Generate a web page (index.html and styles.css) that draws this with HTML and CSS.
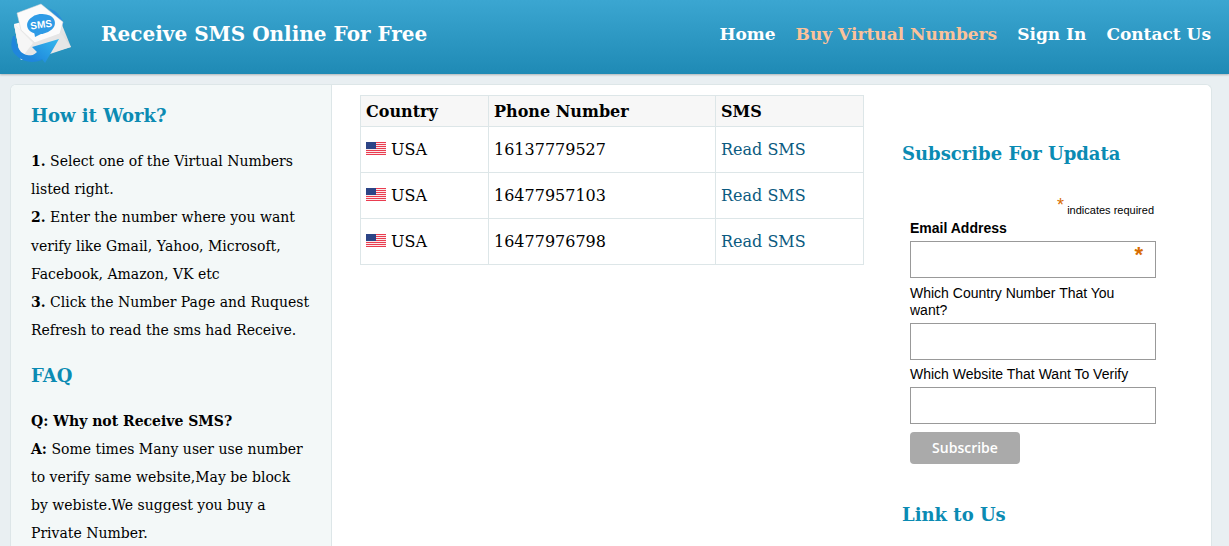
FILE: index.html
```html
<!DOCTYPE html>
<html>
<head>
    <meta charset="UTF-8">
    <title>Receive SMS Online For Free</title>
    <link rel="stylesheet" href="styles.css">
</head>
<body>
    <header class="topbar">
        <div class="brand">
            <svg class="logo" width="64" height="68" viewBox="10 0 64 68">
                <defs>
                    <linearGradient id="arrowFill" x1="0" y1="1" x2="1" y2="0">
                        <stop offset="0" stop-color="#1a7fd8"/>
                        <stop offset="1" stop-color="#35b8ee"/>
                    </linearGradient>
                    <linearGradient id="envFill" x1="0" y1="0" x2="1" y2="1">
                        <stop offset="0" stop-color="#ffffff"/>
                        <stop offset="1" stop-color="#d0d0d0"/>
                    </linearGradient>
                </defs>
                <!-- back swoosh -->
                <path d="M48 8 Q61 12 64 25 L60 25 Q56 14 48 8Z" fill="#2a8fdc"/>
                <!-- envelope and letter -->
                <path d="M14 24 L30 20 L60 20 L71 47 L43 55 L21 60Z" fill="url(#envFill)"/>
                <path d="M17 13 L41 4 L63 22 L60 34 L36 44 L21 30Z" fill="#fbfbfb" stroke="#d4d4d4" stroke-width=".5"/>
                <path d="M14 24 L33 43 L61 33 L71 47 L44 56 L21 60Z" fill="#e6e6e6"/>
                <path d="M14 24 L33 43 L26 52 L21 60Z" fill="#f6f6f6"/>
                <!-- bubble -->
                <ellipse cx="41" cy="24" rx="14" ry="10" transform="rotate(-8 41 24)" fill="#2e9be6"/>
                <path d="M34 31 L35 37 L43 33Z" fill="#2e9be6"/>
                <text class="logo-text" x="41" y="28" text-anchor="middle" transform="rotate(-8 41 24)">SMS</text>
                <!-- arrow -->
                <path d="M13 36 Q8 50 18 57 Q28 65 42 60 L40 54 Q28 58 21 52 Q15 45 15 36Z" fill="#1f86dc"/>
                <path d="M59 39 L32 47 L37 52 Q33 56 28 56 Q36 62 42 59 L45 63Z" fill="url(#arrowFill)"/>
            </svg>
            <span class="site-title">Receive SMS Online For Free</span>
        </div>
        <nav class="main-nav">
            <a href="#">Home</a>
            <a href="#" class="active">Buy Virtual Numbers</a>
            <a href="#">Sign In</a>
            <a href="#">Contact Us</a>
        </nav>
    </header>

    <div class="page">
        <aside class="sidebar">
            <h2>How it Work?</h2>
            <p>
                <b>1.</b> Select one of the Virtual Numbers listed right.<br>
                <b>2.</b> Enter the number where you want verify like Gmail, Yahoo, Microsoft, Facebook, Amazon, VK etc<br>
                <b>3.</b> Click the Number Page and Ruquest Refresh to read the sms had Receive.
            </p>
            <h2>FAQ</h2>
            <p class="faq">
                <b>Q: Why not Receive SMS?</b><br>
                <b>A:</b> Some times Many user use number to verify same website,May be block by webiste.We suggest you buy a Private Number.
            </p>
        </aside>

        <main class="numbers">
            <table>
                <thead>
                    <tr><th class="col-country">Country</th><th class="col-phone">Phone Number</th><th>SMS</th></tr>
                </thead>
                <tbody>
                    <tr>
                        <td><span class="country"><svg class="flag" viewBox="0 0 20 13"><use href="#us"/></svg> USA</span></td>
                        <td>16137779527</td>
                        <td><a href="#">Read SMS</a></td>
                    </tr>
                    <tr>
                        <td><span class="country"><svg class="flag" viewBox="0 0 20 13"><use href="#us"/></svg> USA</span></td>
                        <td>16477957103</td>
                        <td><a href="#">Read SMS</a></td>
                    </tr>
                    <tr>
                        <td><span class="country"><svg class="flag" viewBox="0 0 20 13"><use href="#us"/></svg> USA</span></td>
                        <td>16477976798</td>
                        <td><a href="#">Read SMS</a></td>
                    </tr>
                </tbody>
            </table>
            <svg width="0" height="0" class="defs">
                <symbol id="us" viewBox="0 0 20 13">
                    <rect width="20" height="13" fill="#fbe9ea"/>
                    <path d="M0 .5H20M0 2.5H20M0 4.5H20M0 6.5H20M0 8.5H20M0 10.5H20M0 12.5H20" stroke="#ea3c50" stroke-width="1"/>
                    <rect width="10" height="7" fill="#2c4486"/>
                </symbol>
            </svg>
        </main>

        <aside class="right-col">
            <h2>Subscribe For Updata</h2>
            <form class="signup">
                <div class="required-note"><span class="asterisk">*</span> indicates required</div>
                <label class="email-label" for="email">Email Address</label>
                <div class="email-wrap">
                    <input type="text" id="email">
                    <span class="asterisk field-mark">*</span>
                </div>
                <label for="country">Which Country Number That You want?</label>
                <input type="text" id="country">
                <label for="site">Which Website That Want To Verify</label>
                <input type="text" id="site">
                <button type="button">Subscribe</button>
            </form>
            <h2 class="link-head">Link to Us</h2>
        </aside>
    </div>
</body>
</html>
```
FILE: styles.css
```css
html, body {
    height: 546px;
    overflow: hidden;
}
body {
    margin: 0;
    background-color: #e9eff2;
    font-family: "DejaVu Serif", serif;
    color: #000;
}
/* top bar */
.topbar {
    height: 74px;
    box-sizing: border-box;
    display: flex;
    justify-content: space-between;
    align-items: center;
    padding: 0 18px 6px 10px;
    background: linear-gradient(#3ba6d1, #1f8ab5);
    box-shadow: 0 1px 2px rgba(0, 0, 0, .25);
}
.brand {
    display: flex;
    align-items: center;
}
.logo {
    display: block;
}
.logo-text {
    fill: #fff;
    font-family: "Liberation Sans", sans-serif;
    font-size: 10px;
    font-weight: bold;
}
.site-title {
    margin-left: 27px;
    color: #fff;
    font-size: 20px;
    font-weight: bold;
}
.main-nav {
    display: flex;
    gap: 20px;
}
.main-nav a {
    color: #fff;
    font-size: 17px;
    font-weight: bold;
    text-decoration: none;
}
.main-nav a.active {
    color: #fcc29a;
}
/* page card */
.page {
    display: flex;
    margin: 10px 17px 0 10px;
    height: 462px;
    background-color: #fff;
    border: 1px solid #dde6e8;
    border-bottom: 0;
    border-radius: 6px 6px 0 0;
    overflow: hidden;
}
h2 {
    margin: 0;
    color: #0b8bb3;
    font-size: 18px;
    font-weight: bold;
    line-height: 24px;
}
.sidebar {
    width: 321px;
    flex-shrink: 0;
    box-sizing: border-box;
    padding: 19px 20px 0;
    background-color: #f3f8f8;
    border-right: 1px solid #dde6e8;
}
.sidebar p {
    margin: 19px 0 20px;
    font-size: 14px;
    line-height: 28.17px;
}
.sidebar p.faq {
    line-height: 28px;
}
/* numbers table */
.numbers {
    width: 570px;
    flex-shrink: 0;
    box-sizing: border-box;
    padding: 10px 0 0 28px;
}
table {
    width: 504px;
    border-collapse: collapse;
    font-size: 16px;
}
th, td {
    border: 1px solid #dde6e8;
    padding: 0 5px;
    text-align: left;
}
th {
    height: 30px;
    background-color: #f7f7f7;
    font-size: 16px;
    font-weight: bold;
}
td {
    height: 45px;
}
.col-country {
    width: 117px;
}
.col-phone {
    width: 216px;
}
td a {
    color: #0b5a80;
    text-decoration: none;
}
.country {
    display: flex;
    align-items: center;
    gap: 5px;
}
.flag {
    width: 20px;
    height: 13px;
    margin-top: -2px;
}
.defs {
    position: absolute;
}
/* subscribe */
.right-col {
    flex: 1;
    padding-top: 57px;
}
.signup {
    width: 246px;
    margin: 34px 0 0 8px;
    font-family: "Liberation Sans", sans-serif;
    font-size: 14px;
    line-height: 17px;
}
.required-note {
    text-align: right;
    font-size: 11px;
    padding-right: 2px;
    margin-bottom: 1px;
}
.asterisk {
    color: #d86c00;
    font-size: 18px;
}
.required-note .asterisk {
    vertical-align: 3px;
    line-height: 11px;
}
.signup label {
    display: block;
    padding-right: 20px;
}
.email-label {
    font-weight: bold;
}
.signup input {
    display: block;
    width: 100%;
    height: 37px;
    box-sizing: border-box;
    margin: 4px 0 6px;
    border: 1px solid #999;
    background: #fff;
}
.email-wrap input {
    margin-bottom: 7px;
}
.email-wrap {
    position: relative;
}
.field-mark {
    position: absolute;
    top: 5px;
    right: 13px;
    font-size: 22px;
    font-weight: bold;
}
.signup button {
    display: block;
    width: 110px;
    height: 32px;
    margin-top: 8px;
    padding-bottom: 3px;
    border: 0;
    border-radius: 4px;
    background-color: #aaa;
    color: #fff;
    font-family: "Open Sans", sans-serif;
    font-size: 14px;
    font-weight: 600;
}
.link-head {
    margin-top: 39px;
}
```
